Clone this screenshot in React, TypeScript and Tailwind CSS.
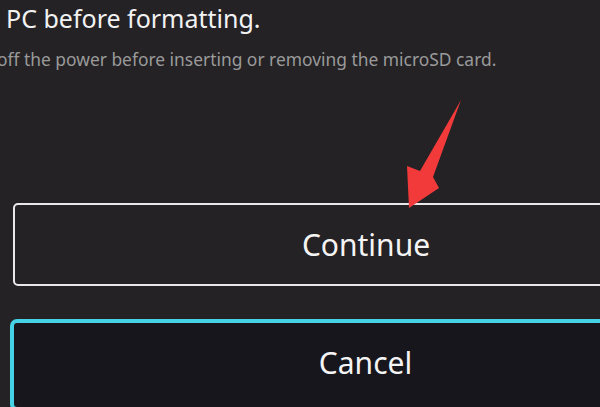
export default function App() {
  return (
    <main
      className="relative w-[600px] h-[407px] overflow-hidden bg-[#242225]"
      style={{ fontFamily: '"Noto Sans", "Open Sans", sans-serif' }}
    >
      <div className="pl-[6px] pt-[1px] text-[25px] leading-[34px] text-[#f2f2f2]">PC before formatting.</div>
      <div className="ml-[-3px] mt-[13px] text-[17.4px] leading-[22px] text-[#9a9a9a] whitespace-nowrap">
        off the power before inserting or removing the microSD card.
      </div>

      <div className="ml-[13px] mt-[133px] flex h-[83px] w-[706px] items-center justify-center rounded-[5px] border-2 border-[#e8e8e8] bg-[#242225]">
        <span className="text-[30px] text-[#f4f4f4]">Continue</span>
      </div>

      <div className="ml-[10px] mt-[33px] flex h-[92px] w-[711px] items-start justify-center rounded-[7px] border-4 border-[#45d2e6] bg-[#17161d] pt-[17px]">
        <span className="text-[30px] text-[#f4f4f4]">Cancel</span>
      </div>

      {/* red annotation arrow */}
      <svg className="absolute left-0 top-0" width="600" height="407" viewBox="0 0 600 407">
        <polygon
          points="461,100 433,177 439,188 409,208 407,166 420,171"
          fill="#f23a3a"
        />
      </svg>
    </main>
  )
}
